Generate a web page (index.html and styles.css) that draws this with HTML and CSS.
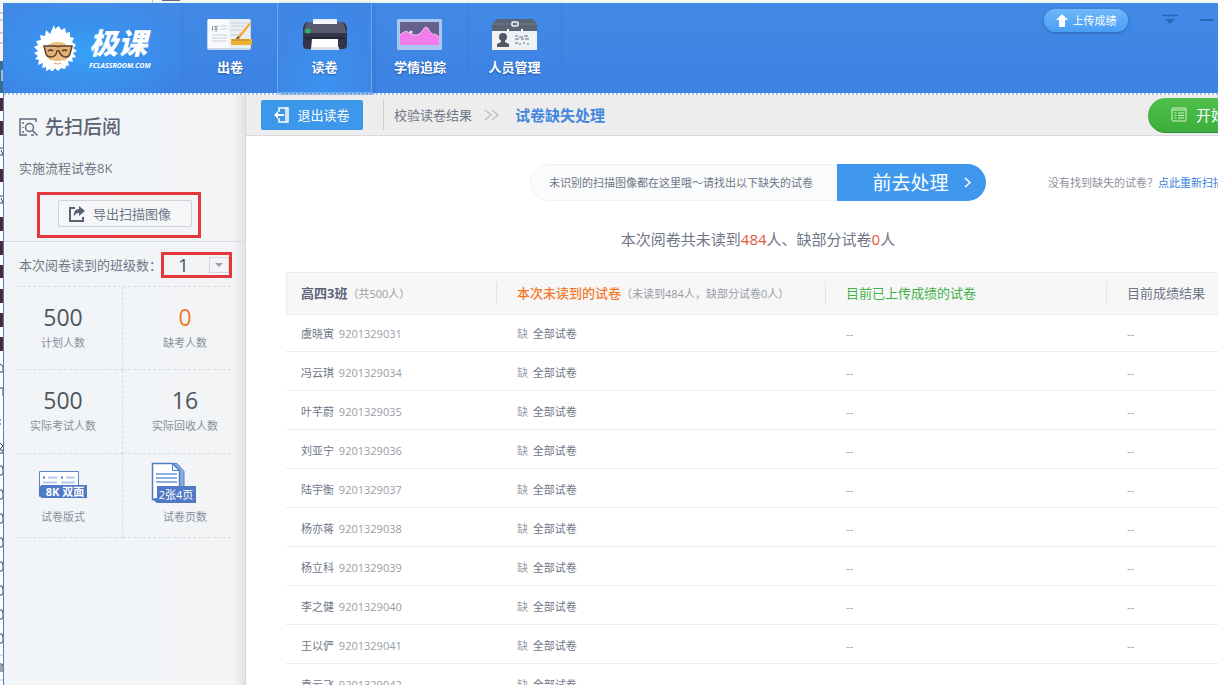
FILE: index.html
```html
<!DOCTYPE html>
<html lang="zh-CN">
<head>
<meta charset="utf-8">
<title>极课 - 试卷缺失处理</title>
<link rel="stylesheet" href="styles.css">
</head>
<body>
<div class="backdrop-top"><span class="tab-edge"></span><span class="tab-mark"></span></div>
<div class="desktop">
  <div class="backdrop-left">
    <svg width="4" height="682" viewBox="0 3 4 682">
      <rect y="3" width="4" height="58" fill="#f4f4f4"/><path d="M0 13h4M0 20h3M0 33h3M0 43h3" stroke="#aaa"/>
      <rect y="61" width="4" height="32" fill="#2f7099"/><path d="M2 70v11" stroke="#cde" stroke-width="1.5"/>
      <g fill="#4b2a30"><rect y="98" width="4" height="13"/><rect y="121" width="4" height="14"/><rect y="169" width="4" height="13"/><rect y="217" width="4" height="14"/><rect y="241" width="4" height="14"/><rect y="265" width="4" height="13"/><rect y="289" width="4" height="14"/><rect y="313" width="4" height="14"/><rect y="337" width="4" height="14"/></g>
      <g fill="none" stroke="#444"><path d="M0 148h3M1 150l2 5H0M0 196h3M1 198l2 5H0M0 364l3 2v6H0M0 388h3v8M0 420h1M0 424h1M0 443l3 3-3 3M0 450h3v3H0M0 466h2l1 3v4l-1 2H0M0 490h2l1 3v4l-1 2H0M0 514h2l1 3v4l-1 2H0M0 538h2l1 3v4l-1 2H0M0 562h2l1 3v4l-1 2H0M0 586h2l1 3v4l-1 2H0M0 610h2l1 3v4l-1 2H0M0 634h2l1 3v4l-1 2H0M0 664h2l1 2v6M1 665v7"/></g>
      <path d="M0 655h4M0 680h4" stroke="#bbb"/>
    </svg>
  </div>
  <div class="app">
    <header class="header">
      <div class="logo">
        <svg class="logo-face" width="46" height="46" viewBox="0 0 46 46">
          <path d="M20 0l1 4 4-3 2 4 4-2 1 5 4-1v5l4 1-2 4 4 3-3 3 4 3-4 2 3 4-4 1 1 4-5-1 1 5-4-1-1 4-3-2-3 3-3-2-3 4-2-3-4 2v-4l-4 1 1-5-5 2 1-5-4-1 3-3-4-3 4-2-4-4 4-2-2-4 5-1-1-5 5 1 1-6 4 4z" fill="#fff"/>
          <path d="M12 24c1-5 6-7 12-7s10 3 11 8-1 9-5 11H17c-4-3-6-7-5-12z" fill="#edbd82"/>
          <path d="M10 21h12q2 1 4 0h12l-2 8q-1 3-4 3-5 0-7-6h-2q-1 6-6 6-4 0-5-3z" fill="#e3b173" stroke="#5b4030" stroke-width="1.5"/>
          <path d="M14 26q3-2 5 0M28 26q3-2 5 0" stroke="#523a2c" stroke-width="1.5" fill="none"/>
          <path d="M13 36l5-1 3 1 3 1 4-2 6 2-3 7-4-1-3 3-3-3-3 3-3-4z" fill="#fff"/>
          <path d="M20 38q4 2 7 0" stroke="#dca56c" fill="none"/>
        </svg>
        <div class="logo-text"><strong>极课</strong><span>FCLASSROOM.COM</span></div>
      </div>
      <nav class="nav">
        <button class="nav-item">
          <svg width="46" height="34" viewBox="0 0 46 34">
            <rect x="0" y="1" width="44" height="31" rx="2" fill="#c7d6e8"/><rect x="1" y="1" width="21" height="29" fill="#f7f9fb"/><rect x="22" y="1" width="21" height="29" fill="#e9eff5"/>
            <g fill="none" stroke="#8c98a5"><path d="M5.500 8v5M7 8.500h4M7 11h4M9 8v6"/><path d="M13 8h7M13 11h7M5 17h15M5 20h15M5 23h15M24 5h16M24 8h13M24 12h10M24 17h7" stroke="#c9d0d9"/></g>
            <path d="M43 4l-12 14-3 4 5-2L44 6z" fill="#f6a938"/><path d="M31 18l-3 4 5-2z" fill="#66604d"/>
            <rect x="24" y="21" width="21" height="6" fill="#eeb02f"/><path d="M26 21v2m3-2v2m3-2v2m3-2v2m3-2v2m3-2v2" stroke="#a77c24"/>
          </svg><span>出卷</span>
        </button>
        <button class="nav-item active">
          <svg width="46" height="34" viewBox="0 0 46 34">
            <path d="M11 1h24v6H11z" fill="#e9eff8"/><path d="M5 4h36q3 1 4 6v17q0 4-4 4H5q-4 0-4-4V10q1-5 4-6z" fill="#343548"/><path d="M5 4h36l4 11H1z" fill="#595b70"/><path d="M11 3h24v3H11z" fill="#f5f7fd"/><path d="M3 19h40v2H3z" fill="#252737"/>
            <circle cx="6" cy="13" r="2.500" fill="#29bd59"/><path d="M10 21h26v11H9z" fill="#fff"/><path d="M9 29h28v3H9z" fill="#d9e1eb"/>
          </svg><span>读卷</span>
        </button>
        <button class="nav-item">
          <svg width="46" height="34" viewBox="0 0 46 34">
            <rect x="0" y="1" width="45" height="31" rx="1" fill="#a9c7f0"/><rect x="3" y="4" width="39" height="23" fill="#66618c"/>
            <path d="M3 17q5-5 8-3 3 3 7 3 4 1 8-5 3-6 6 0 3 6 6 4l4 3v8H3z" fill="#f27dea"/><path d="M3 17q5-5 8-3 3 3 7 3 4 1 8-5 3-6 6 0 3 6 6 4l4 3" fill="none" stroke="#f5cbfa"/><circle cx="14" cy="14" r="1.500" fill="#e2f4ff"/>
          </svg><span>学情追踪</span>
        </button>
        <button class="nav-item">
          <svg width="46" height="34" viewBox="0 0 46 34">
            <path d="M5 1h36l4 5v8H0V6z" fill="#596475"/><path d="M0 6h45" stroke="#737f91"/><path d="M0 13h45v19H0z" fill="#eef1f5"/>
            <rect x="20" y="4" width="6" height="4" rx="1" fill="none" stroke="#f3f6fa" stroke-width="1.500"/><path d="M16 11v3M30 11v3" stroke="#fff" stroke-width="2"/>
            <circle cx="11" cy="19" r="4" fill="#4e5867"/><path d="M9 22h4v2l4 2v3H5v-3l4-2z" fill="#4e5867"/>
            <path d="M23 18h3m1 1h4m1-1h4M23 21h4m2 0h3m1 0h4M23 25h3m1 1h2m2-1h2m2 1h2" stroke="#67717e" fill="none"/>
          </svg><span>人员管理</span>
        </button>
      </nav>
      <div class="window-tools">
        <button class="upload">
          <svg width="12" height="13" viewBox="0 0 12 13"><path d="M6 0l6 6H9v7H3V6H0z" fill="#fff"/></svg>上传成绩
        </button>
        <button class="win-btn" aria-label="菜单"><svg width="16" height="12" viewBox="0 0 16 12"><path d="M0 1.500h16" stroke="#2b68b8" stroke-width="1.500"/><path d="M3 5h10l-5 5z" fill="#2b68b8"/></svg></button>
        <button class="win-btn" aria-label="最小化"><svg width="14" height="12" viewBox="0 0 14 12"><path d="M0 6h14" stroke="#2b68b8" stroke-width="2"/></svg></button>
      </div>
    </header>
    <div class="body">
      <aside class="sidebar">
        <h1 class="side-title">
          <svg width="19" height="19" viewBox="0 0 19 19" fill="none" stroke="#5f6879" stroke-width="1.500"><path d="M17 4V1H1v16h7"/><circle cx="10.500" cy="9.500" r="4"/><path d="M13.500 12.500l5 5M12 17h3"/><path d="M4 4v2M4 9v1M4 13v2"/></svg>先扫后阅
        </h1>
        <p class="exam-name">实施流程试卷8K</p>
        <div class="mark export-mark">
          <button class="export">
            <svg width="16" height="16" viewBox="0 0 16 16"><path d="M6 2H1v13h13v-4" fill="none" stroke="#596172" stroke-width="2"/><path d="M10 0l6 5-6 5V7Q6 7 5 11 4 3 10 3z" fill="#596172"/></svg>导出扫描图像
          </button>
        </div>
        <div class="class-row">
          <label for="class-count">本次阅卷读到的班级数<span class="punct">：</span></label>
          <div class="mark class-mark">
            <select id="class-count" class="class-select"><option>1</option></select>
            <span class="select-arrow"></span>
          </div>
        </div>
        <div class="stats">
          <div class="stat"><b>500</b><span>计划人数</span></div>
          <div class="stat"><b class="orange">0</b><span>缺考人数</span></div>
          <div class="stat"><b>500</b><span>实际考试人数</span></div>
          <div class="stat"><b>16</b><span>实际回收人数</span></div>
          <div class="stat picture">
            <svg width="50" height="42" viewBox="0 0 50 42">
              <path d="M1.500 9.500h39v22l-39 3z" fill="#fff" stroke="#5b85c8"/><path d="M1 33l3 3V24H1z" fill="#4d78c2"/>
              <path d="M5 15.500h2M23 15.500h2" stroke="#4d78c2" stroke-width="2"/><path d="M10 15.500h9M28 15.500h9M5 20.500h14M23 20.500h14" stroke="#b4cbed" stroke-width="2"/>
              <rect x="3" y="23" width="46" height="13" fill="#5079c6"/><text x="27" y="34" class="tag wide">8K 双面</text>
            </svg><span>试卷版式</span>
          </div>
          <div class="stat picture">
            <svg class="pages" width="46" height="42" viewBox="0 0 46 42">
              <path d="M21 1.500h5l7 8v15h-5z" fill="#8eabe0" stroke="#5681c8"/>
              <path d="M1.500 1.500h20l7 7v24l-24 5h-3z" fill="#fff" stroke="#4f7cc5" stroke-width="1.500"/><path d="M21.500 1.500v7h7" fill="none" stroke="#4f7cc5"/><path d="M1 37l5 4v-5z" fill="#4d78c2"/>
              <path d="M5 12h21M5 16h21M5 20h21" stroke="#6c95d7" stroke-width="1.500"/><rect x="6" y="24" width="39" height="17" fill="#5079c6"/><text x="25" y="37" class="tag">2张4页</text>
            </svg><span>试卷页数</span>
          </div>
        </div>
      </aside>
      <main class="main">
        <div class="toolbar">
          <button class="exit">
            <svg width="15" height="16" viewBox="0 0 15 16" fill="none" stroke="#fff" stroke-width="1.500"><path d="M5 5V1h9v14H5v-4M12 1v14"/><path d="M0 8l4-4v3h6v2H4v3z" fill="#fff" stroke="none"/></svg>退出读卷
          </button>
          <div class="crumbs">
            <span>校验读卷结果</span>
            <svg width="15" height="12" viewBox="0 0 15 12" fill="none" stroke="#bfc1c6" stroke-width="1.500"><path d="M1 1l6 5-6 5M8 1l6 5-6 5"/></svg>
            <strong>试卷缺失处理</strong>
          </div>
          <button class="start">
            <svg width="16" height="15" viewBox="0 0 16 15" fill="none" stroke="#d5f5c9"><rect x="1" y="1" width="14" height="13" rx="1"/><path d="M1 3h14M3.500 6h2M7 6h6M3.500 8.500h2M7 8.500h6M3.500 11h2M7 11h6"/></svg>开始阅卷
          </button>
        </div>
        <div class="notice">
          <div class="pill">
            <span class="pill-text">未识别的扫描图像都在这里哦～请找出以下缺失的试卷</span>
            <button class="go">前去处理<svg width="8" height="11" viewBox="0 0 8 11" fill="none" stroke="#fff" stroke-width="1.500"><path d="M1 1l5 4.500-5 4.500"/></svg></button>
          </div>
          <p class="rescan">没有找到缺失的试卷<span class="punct">？</span><a href="#">点此重新扫描</a></p>
        </div>
        <p class="summary">本次阅卷共未读到<em>484</em>人、缺部分试卷<em>0</em>人</p>
        <table class="papers">
          <colgroup><col class="c-name"><col class="c-missing"><col class="c-uploaded"><col></colgroup>
          <thead><tr>
            <th><b class="class-name">高四3班</b><small>（共500人）</small></th>
            <th><b class="orange">本次未读到的试卷</b><small>（未读到484人<span class="punct">，</span>缺部分试卷0人）</small></th>
            <th><b class="green">目前已上传成绩的试卷</b></th>
            <th><b>目前成绩结果</b></th>
          </tr></thead>
          <tbody>
            <tr><td>虞晓寅 <i>9201329031</i></td><td><i>缺</i> 全部试卷</td><td><i>--</i></td><td><i>--</i></td></tr>
            <tr><td>冯云琪 <i>9201329034</i></td><td><i>缺</i> 全部试卷</td><td><i>--</i></td><td><i>--</i></td></tr>
            <tr><td>叶芊蔚 <i>9201329035</i></td><td><i>缺</i> 全部试卷</td><td><i>--</i></td><td><i>--</i></td></tr>
            <tr><td>刘亚宁 <i>9201329036</i></td><td><i>缺</i> 全部试卷</td><td><i>--</i></td><td><i>--</i></td></tr>
            <tr><td>陆宇衡 <i>9201329037</i></td><td><i>缺</i> 全部试卷</td><td><i>--</i></td><td><i>--</i></td></tr>
            <tr><td>杨亦蒋 <i>9201329038</i></td><td><i>缺</i> 全部试卷</td><td><i>--</i></td><td><i>--</i></td></tr>
            <tr><td>杨立科 <i>9201329039</i></td><td><i>缺</i> 全部试卷</td><td><i>--</i></td><td><i>--</i></td></tr>
            <tr><td>李之健 <i>9201329040</i></td><td><i>缺</i> 全部试卷</td><td><i>--</i></td><td><i>--</i></td></tr>
            <tr><td>王以俨 <i>9201329041</i></td><td><i>缺</i> 全部试卷</td><td><i>--</i></td><td><i>--</i></td></tr>
            <tr><td>袁云飞 <i>9201329042</i></td><td><i>缺</i> 全部试卷</td><td><i>--</i></td><td><i>--</i></td></tr>
          </tbody>
        </table>
      </main>
    </div>
  </div>
</div>
</body>
</html>
```
FILE: styles.css
```css
* { box-sizing: border-box; }
body {
  margin: 0;
  height: 100vh;
  overflow: hidden;
  display: flex;
  flex-direction: column;
  background: #fff;
  color: #6f7686;
  font-family: "Open Sans", "Noto Sans CJK SC", sans-serif;
  font-size: 13px;
  line-height: 20px;
}
button, select { font: inherit; color: inherit; border: 0; padding: 0; margin: 0; background: none; }
h1, p { margin: 0; }
svg { flex: none; display: block; }
em, i { font-style: normal; }
.punct { font-family: "Noto Sans CJK TC", sans-serif; }

.backdrop-top { height: 3px; flex: none; background: #f2f8f4; display: flex; padding-left: 152px; }
.tab-edge { width: 10px; border-left: 1px solid #bbb; }
.tab-mark { width: 18px; height: 3px; border-top: 1px solid #667; }
.desktop { flex: 1; min-height: 0; display: flex; }
.backdrop-left { width: 3px; flex: none; background: #fff; }
/* the application window runs past the right edge of the screen */
.app { flex: 1; min-width: 0; margin-right: -52px; display: flex; flex-direction: column; border-left: 1px solid #4f7fcb; }

.header {
  flex: none;
  height: 90px;
  display: flex;
  background: radial-gradient(ellipse 110px 60px at 80px 50px, #37a0f7, #3b90ee 50%, transparent), linear-gradient(#4389e6, #3b82e3);
}
.logo { width: 178px; display: flex; align-items: center; gap: 9px; padding-left: 30px; }
.logo-text { display: flex; flex-direction: column; color: #fff; font-style: italic; }
.logo-text strong { font-size: 29px; line-height: 36px; font-weight: 900; }
.logo-text span { font-size: 7px; line-height: 10px; font-weight: 700; }
.nav { display: flex; }
.nav-item {
  width: 95px;
  display: flex;
  flex-direction: column;
  justify-content: flex-start;
  align-items: center;
  gap: 6px;
  padding-top: 15px;
  border-left: 1px solid #3c7fdb;
  color: #fff;
  font-weight: 700;
  line-height: 18px;
  text-shadow: 0 1px 2px #2457a0;
}
.nav-item:last-child { border-right: 1px solid #3c7fdb; }
.nav-item.active { background: radial-gradient(ellipse at 50% 100%, #3b93f1, #3f86e5 75%); border: 1px solid #6aa8f0; border-top: 0; box-shadow: 2px 2px 4px #3574cc; }
.window-tools { margin-left: auto; display: flex; align-items: flex-start; gap: 22px; padding: 6px 56px 0 0; }
.upload {
  height: 23px;
  width: 84px;
  margin-right: 12px;
  border-radius: 12px;
  display: flex;
  align-items: center;
  justify-content: center;
  gap: 5px;
  color: #fff;
  font-size: 11px;
  background: linear-gradient(#6db8fb, #4a9df4);
  box-shadow: 0 1px 3px #2a62ad;
}
.win-btn { height: 22px; display: flex; align-items: center; }

.body { flex: 1; min-height: 0; display: flex; border-top: 2px dotted #a5c4ea; }
.sidebar {
  width: 242px;
  flex: none;
  background: linear-gradient(90deg, #f2f5f7, #f2f4f6 230px, #e2e5e7 240px);
  border-right: 1px solid #d3d6d9;
}
.side-title { display: flex; align-items: center; gap: 7px; padding: 20px 0 0 15px; font-size: 19px; line-height: 24px; font-weight: 500; color: #5b6273; }
.exam-name { padding: 19px 0 0 15px; }
.mark { border: 3px solid #e5383c; }
.export-mark { margin: 14px 44px 3px 33px; padding: 5px 6px 8px 18px; }
.export {
  width: 100%;
  height: 27px;
  display: flex;
  align-items: center;
  gap: 8px;
  padding-left: 10px;
  border: 1px solid #cfd2d7;
  border-radius: 2px;
  background: #f5f6f8;
}
.class-row { display: flex; align-items: center; border-top: 1px solid #d8dbdf; padding: 10px 0 8px 15px; }
.class-row label { width: 142px; white-space: nowrap; }
.class-mark { position: relative; width: 71px; height: 26px; }
.class-select { appearance: none; width: 100%; height: 20px; padding-left: 14px; font-size: 19px; line-height: 20px; color: #50555f; display: block; }
.select-arrow { position: absolute; right: 0; top: 2px; width: 20px; height: 16px; border: 1px solid #d3d6da; display: grid; place-items: center; pointer-events: none; }
.select-arrow::after { content: ""; border: 4px solid transparent; border-top-color: #9a9da3; border-bottom: 0; }

.stats { margin: 0 14px; display: grid; grid-template-columns: 105px 1fr; grid-template-rows: 83px 84px 84px; border-top: 1px dashed #d9dce0; }
.stat { display: flex; flex-direction: column; align-items: center; padding: 15px 14px 0 0; border-bottom: 1px dashed #d9dce0; border-right: 1px dashed #d9dce0; font-size: 11px; white-space: nowrap; }
.stat:nth-child(even) { border-right: 0; padding: 15px 0 0 16px; }
.stat b { font-size: 23px; line-height: 30px; font-weight: 400; color: #50555d; }
.stat span { line-height: 22px; color: #8a909d; }
.stat.picture { padding-top: 8px; gap: 2px; }
.pages { margin-right: 22px; }
.tag { fill: #fff; font-size: 11px; text-anchor: middle; }
.tag.wide { font-weight: 700; }
.stat .orange, .papers .orange { color: #f2792b; }

.main { flex: 1; min-width: 0; }
.toolbar { height: 41px; display: flex; align-items: center; background: #ededee; border-bottom: 1px solid #d9d9db; padding-left: 15px; }
.exit {
  width: 102px;
  height: 30px;
  border-radius: 2px;
  background: #3d97ea;
  color: #fff;
  display: flex;
  align-items: center;
  justify-content: center;
  gap: 8px;
}
.crumbs { display: flex; align-items: center; gap: 12px; height: 30px; margin-left: 20px; padding-left: 10px; border-left: 1px solid #ccced1; }
.crumbs strong { font-size: 15px; color: #4388dc; margin-left: 4px; }
.start {
  margin-left: auto;
  width: 122px;
  height: 35px;
  display: flex;
  align-items: center;
  gap: 9px;
  padding-left: 23px;
  border-radius: 18px 0 0 18px;
  background: linear-gradient(#4fc04b, #3dad3b);
  border-bottom: 1px solid #2c8c35;
  color: #fff;
  font-size: 15px;
  white-space: nowrap;
}
.notice { display: grid; grid-template-columns: 1fr 456px 1fr; align-items: center; padding-top: 28px; }
.pill { grid-column: 2; display: flex; height: 37px; border-radius: 19px; overflow: hidden; background: #fafbfc; }
.pill-text { flex: 1; align-self: stretch; border: 1px solid #f0f1f3; border-radius: 19px 0 0 19px; line-height: 35px; padding-left: 18px; font-size: 11px; white-space: nowrap; }
.go { width: 149px; display: flex; align-items: center; justify-content: center; gap: 15px; padding-left: 21px; background: #3f97ee; color: #fff; font-size: 19px; padding-right: 0; }
.rescan { padding-left: 62px; font-size: 11px; white-space: nowrap; color: #8d919b; }
.rescan a { color: #3b82dc; text-decoration: none; }
.summary { text-align: center; font-size: 15px; line-height: 24px; padding: 26px 0 21px; }
.summary em { color: #e8563a; }

.papers { width: calc(100% - 80px); margin-left: 40px; table-layout: fixed; border-collapse: separate; border-spacing: 0; font-size: 11px; text-align: left; }
.c-name { width: 210px; }
.c-missing { width: 329px; }
.c-uploaded { width: 281px; }
.papers th { height: 43px; padding: 0 0 0 21px; white-space: nowrap; font-size: 11px; font-weight: 400; background: linear-gradient(#e2e4e7, #e2e4e7) 0 9px / 1px 23px no-repeat #f7f7f8; border: solid #ebecee; border-width: 1px 0; }
.papers th:first-child { padding-left: 14px; background: #f7f7f8; border-left-width: 1px; }
.papers th b { font-size: 13px; font-weight: 400; }
.papers th .class-name { font-weight: 700; color: #5c6475; }
.papers th .orange { font-weight: 500; }
.papers th small { font-size: 11px; color: #989ca5; }
.papers .green { color: #43b04a; }
.papers td { height: 39px; padding: 3px 0 0 21px; border-bottom: 1px solid #ececee; }
.papers td:first-child { padding-left: 15px; }
.papers td:first-child i { margin-left: 2px; }
.papers tbody tr:first-child td { height: 37px; padding-top: 1px; }
.papers i { color: #989da6; margin-right: 2px; }
```
